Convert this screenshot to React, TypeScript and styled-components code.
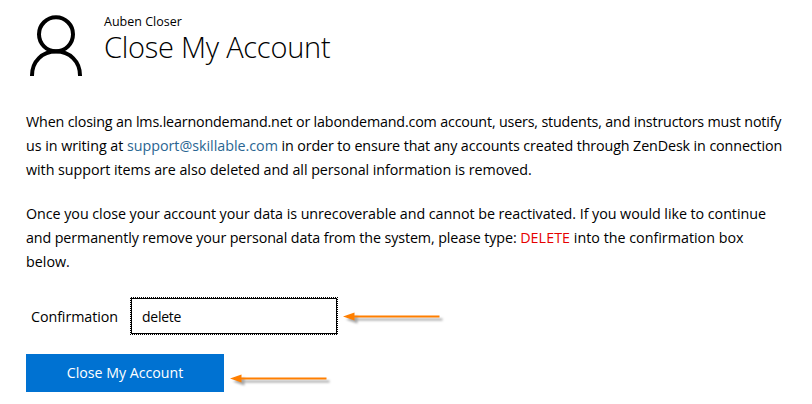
import React from "react";
import styled, { createGlobalStyle } from "styled-components";

const GlobalStyle = createGlobalStyle`
  * { box-sizing: border-box; }
  body {
    margin: 0;
    background: #fff;
    color: #000;
    font-family: "Open Sans", "Noto Sans", sans-serif;
    font-size: 14.3px;
    line-height: 24px;
  }
`;

const Page = styled.main`
  display: flex;
  flex-direction: column;
  width: 812px;
  height: 404px;
  padding: 13px 0 0 26px;
  overflow: hidden;
`;

const Header = styled.header`
  display: flex;
  height: 97px;
`;

const Avatar = styled.svg`
  flex: none;
  width: 60px;
  height: 64px;
  margin-right: 18px;
`;

const Heading = styled.div`
  display: flex;
  flex-direction: column;
`;

const UserName = styled.span`
  font-size: 12.5px;
  line-height: 17px;
`;

const Title = styled.h1`
  margin: 0;
  font-size: 29px;
  font-weight: 300;
  line-height: 34px;
  letter-spacing: -0.25px;
`;

const Paragraph = styled.p`
  margin: 0 0 20px;
`;

const Line = styled.span`
  display: block;
  white-space: pre;
`;

const Run = styled.span<{ $track: number }>`
  letter-spacing: ${(p) => p.$track}px;
`;

const MailLink = styled.a`
  color: #2a6592;
  text-decoration: none;
  letter-spacing: -0.02px;
`;

const Keyword = styled.span`
  color: #e60000;
  letter-spacing: 0.07px;
`;

const FormRow = styled.div`
  display: flex;
  align-items: center;
  height: 38px;
  margin-top: 3px;
`;

const Label = styled.label`
  width: 104px;
  padding: 2px 0 0 5px;
  letter-spacing: -0.08px;
`;

const InputFrame = styled.div`
  display: flex;
  width: 208px;
  height: 38px;
  padding: 1px;
  background: repeating-conic-gradient(#000 0 25%, #fff 0 50%) 0 0 / 2px 2px;
`;

const Input = styled.input`
  width: 100%;
  padding: 1px 10px 0;
  border: 1px solid #000;
  border-radius: 0;
  outline: 0;
  background: #fff;
  color: #000;
  font: 14px/24px "Open Sans", "Noto Sans", sans-serif;
  letter-spacing: -0.25px;
`;

const ButtonRow = styled.div`
  display: flex;
  align-items: center;
  height: 38px;
  margin-top: 19px;
`;

const SubmitButton = styled.button`
  width: 198px;
  height: 38px;
  padding: 0;
  border: 0;
  background: #0072d2;
  color: #fff;
  font: 14.2px/24px "Open Sans", "Noto Sans", sans-serif;
`;

const ArrowSvg = styled.svg<{ $gap: number; $drop: number }>`
  flex: none;
  width: 104px;
  height: 20px;
  margin-left: ${(p) => p.$gap}px;
  margin-top: ${(p) => p.$drop}px;
  overflow: visible;
  filter: drop-shadow(3px 3px 1.2px rgba(0, 0, 0, 0.35));
`;

function Arrow({ gap, drop }: { gap: number; drop: number }) {
  return (
    <ArrowSvg $gap={gap} $drop={drop} viewBox="0 0 104 20" aria-hidden="true">
      <path d="M0 9.5 11.5 5.5V8.5H96.5V10.5H11.5V13.5Z" fill="#ff7f00" />
    </ArrowSvg>
  );
}

export default function App() {
  return (
    <>
      <GlobalStyle />
      <Page>
        <Header>
          <Avatar viewBox="0 0 60 64" fill="none" stroke="#000" strokeWidth="4" aria-hidden="true">
            <circle cx="30" cy="21.3" r="17" />
            <path d="M6 63V62.5C6 48 16.5 38.5 30 38.5S54 48 54 62.5V63" />
          </Avatar>
          <Heading>
            <UserName>Auben Closer</UserName>
            <Title>Close My Account</Title>
          </Heading>
        </Header>
        <Paragraph>
          <Line>
            <Run $track={-0.17}>
              When closing an lms.learnondemand.net or labondemand.com account, users, students, and instructors must notify
            </Run>
          </Line>
          <Line>
            <Run $track={-0.04}>us in writing at </Run>
            <MailLink href="mailto:support@skillable.com">support@skillable.com</MailLink>
            <Run $track={-0.11}> in order to ensure that any accounts created through ZenDesk in connection</Run>
          </Line>
          <Line>
            <Run $track={-0.05}>with support items are also deleted and all personal information is removed.</Run>
          </Line>
        </Paragraph>
        <Paragraph>
          <Line>
            <Run $track={-0.05}>
              Once you close your account your data is unrecoverable and cannot be reactivated. If you would like to continue
            </Run>
          </Line>
          <Line>
            <Run $track={-0.11}>and permanently remove your personal data from the system, please type: </Run>
            <Keyword>DELETE</Keyword>
            <Run $track={0}> into the confirmation box</Run>
          </Line>
          <Line>below.</Line>
        </Paragraph>
        <FormRow>
          <Label htmlFor="confirmation">Confirmation</Label>
          <InputFrame>
            <Input id="confirmation" type="text" defaultValue="delete" />
          </InputFrame>
          <Arrow gap={5} drop={2} />
        </FormRow>
        <ButtonRow>
          <SubmitButton type="button">Close My Account</SubmitButton>
          <Arrow gap={6} drop={11} />
        </ButtonRow>
      </Page>
    </>
  );
}
